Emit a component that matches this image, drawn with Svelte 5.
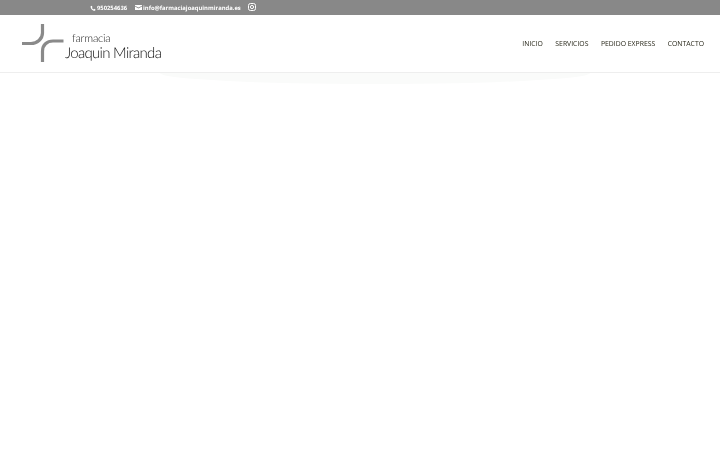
<script>
  const links = ['INICIO', 'SERVICIOS', 'PEDIDO EXPRESS', 'CONTACTO'];
</script>

<div class="page">
  <div class="topbar">
    <span class="item phone">
      <svg width="6" height="7" viewBox="0 0 10 10"><path d="M1 1.200 3 .5l1.200 2.400-1 .9c.5 1.200 1.400 2.100 2.600 2.700l1-1 2.400 1.300-.7 2.100C5 9.400 .6 5 1 1.200z" fill="#fff"/></svg>
      950254636
    </span>
    <span class="item mail">
      <svg class="mail-icon" width="7" height="5" viewBox="0 0 7 5"><path d="M0 0h7v.7L3.500 2.600 0 .7zM0 1.500 3.500 3.400 7 1.500V5H0z" fill="#fff"/></svg>
      info@farmaciajoaquinmiranda.es
    </span>
    <svg class="insta" width="8" height="8" viewBox="0 0 8 8" fill="none" stroke="#fff" stroke-width="1"><rect x=".5" y=".5" width="7" height="7" rx="2"/><circle cx="4" cy="4" r="1.600"/></svg>
  </div>

  <header>
    <div class="logo">
      <svg class="mark" width="44" height="38" viewBox="0 0 44 38" fill="none" stroke="#8a8a8a" stroke-width="3.200">
        <path d="M1 19.500H10C16 19.500 21.500 15 21.500 9V0"/>
        <path d="M42.500 17H32C26 17 21.500 21 21.500 27V38"/>
      </svg>
      <div class="wordmark">
        <span class="small">farmacia</span>
        <span class="big">Joaquin Miranda</span>
      </div>
    </div>
    <nav>
      {#each links as link}
        <a href="#top">{link}</a>
      {/each}
    </nav>
    <div class="shade"></div>
  </header>
</div>

<style>
  :global(body) {
    margin: 0;
    background: #fff;
  }
  .page {
    width: 720px;
    height: 450px;
    overflow: hidden;
    background: #fff;
    font-family: "Open Sans", sans-serif;
    text-rendering: geometricPrecision;
  }
  .topbar {
    height: 15px;
    box-sizing: border-box;
    padding: 1px 0 0 90px;
    background: #888;
    display: flex;
    align-items: center;
    color: #fff;
    font-size: 5.850px;
    font-weight: 700;
    line-height: 14px;
  }
  .item {
    display: inline-flex;
    align-items: center;
    gap: 1px;
    white-space: nowrap;
    will-change: opacity;
  }
  .mail {
    margin-left: 8px;
  }
  .mail-icon {
    margin-top: -1px;
  }
  .insta {
    margin-left: 7px;
    margin-top: -2px;
  }
  header {
    position: relative;
    height: 57px;
    border-bottom: 1px solid #eeeeee;
    display: flex;
    align-items: center;
    justify-content: space-between;
    padding: 0 16px 0 21px;
  }
  .logo {
    display: flex;
    align-items: flex-start;
    height: 38px;
    margin-top: -1px;
  }
  .mark {
    flex: none;
  }
  .wordmark {
    display: flex;
    flex-direction: column;
    font-family: Lato, sans-serif;
    font-weight: 300;
    color: #111;
    white-space: nowrap;
    margin-top: 8px;
    will-change: opacity;
  }
  .small {
    font-size: 11px;
    line-height: 13px;
    margin-left: 7px;
    letter-spacing: -0.2px;
  }
  .big {
    font-size: 15px;
    line-height: 17px;
    letter-spacing: -0.7px;
  }
  nav {
    display: flex;
    gap: 12.500px;
    margin-top: 2px;
    will-change: opacity;
  }
  nav a {
    color: #1f1e10;
    text-decoration: none;
    font-size: 6.850px;
    font-weight: 500;
  }
  .shade {
    position: absolute;
    left: 160px;
    width: 430px;
    top: 100%;
    height: 11px;
    margin-top: 1px;
    border-radius: 0 0 50% 50% / 0 0 100% 100%;
    background: #fafbfa;
  }
</style>
